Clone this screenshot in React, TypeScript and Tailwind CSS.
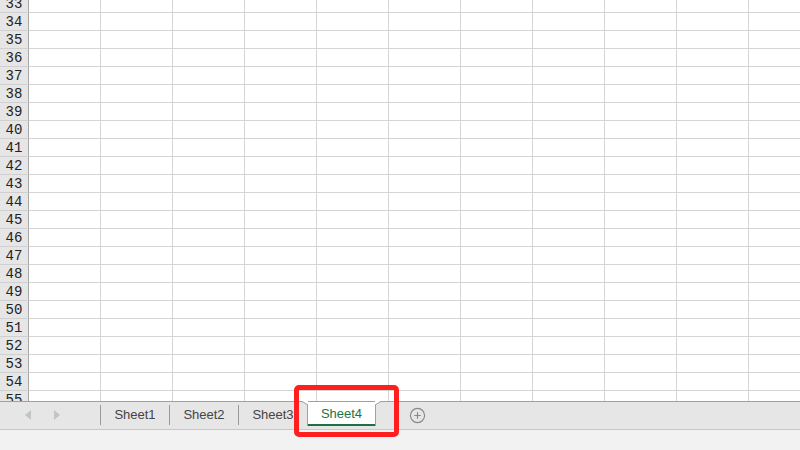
import { FiPlusCircle } from "react-icons/fi";

const rows = Array.from({ length: 23 }, (_, i) => 33 + i);
const cols = Array.from({ length: 11 }, (_, i) => i);

const tabs = ["Sheet1", "Sheet2", "Sheet3"];

export default function App() {
    return (
        <div className="relative flex h-[450px] w-[800px] flex-col overflow-hidden bg-white font-['Liberation_Sans',Arial,sans-serif]">
            {/* GRADE DE CELULAS */}
            <div className="h-[401px] overflow-hidden">
                <div className="-mt-[5px]">
                    {rows.map((row) => (
                        <div key={row} className="flex h-[18px]">
                            <div className="flex w-[29px] shrink-0 items-center justify-center border-r border-b border-r-[#a6a6a6] border-b-[#d0d0d0] bg-[#e6e6e6] font-['Liberation_Mono',monospace] text-[14px] leading-none text-[#222]">
                                {row}
                            </div>
                            {cols.map((col) => (
                                <div key={col} className="w-[72px] shrink-0 border-r border-b border-[#d4d4d4]" />
                            ))}
                        </div>
                    ))}
                </div>
            </div>

            {/* BARRA DE ABAS */}
            <div className="flex h-[29px] items-start border-t border-b border-t-[#a0a0a0] border-b-[#c8c8c8] bg-[#e6e6e6]">
                <div className="flex h-[26px] w-[100px] shrink-0 items-center">
                    <svg width="6" height="10" viewBox="0 0 6 10" className="ml-[25px]">
                        <path d="M6 0 L0 5 L6 10 Z" fill="#c4c4c4" />
                    </svg>
                    <svg width="6" height="10" viewBox="0 0 6 10" className="ml-[23px]">
                        <path d="M0 0 L6 5 L0 10 Z" fill="#c4c4c4" />
                    </svg>
                </div>
                {tabs.map((tab) => (
                    <div key={tab} className="flex h-[26px] items-center">
                        <div className="h-[20px] w-px bg-[#9a9a9a]" />
                        <div className="w-[68px] text-center text-[13px] text-[#444]">{tab}</div>
                    </div>
                ))}

                {/* ABA ATIVA */}
                <div className="relative flex h-[24px] w-[69px] items-center justify-center border-x border-[#a0a0a0] bg-white">
                    <svg width="6" height="4" viewBox="0 0 6 4" className="absolute -top-px -left-[6px]">
                        <path d="M0 0 L6 4 L6 0 Z" fill="#ffffff" />
                        <path d="M0 0.5 L6 4" stroke="#a0a0a0" strokeWidth="1" />
                    </svg>
                    <svg width="6" height="4" viewBox="0 0 6 4" className="absolute -top-px -right-[6px]">
                        <path d="M6 0 L0 4 L0 0 Z" fill="#ffffff" />
                        <path d="M6 0.5 L0 4" stroke="#a0a0a0" strokeWidth="1" />
                    </svg>
                    <span className="text-[13px] text-[#1e7145]">Sheet4</span>
                    <div className="absolute right-0 bottom-0 left-0 h-[2px] bg-[#1e7145]" />
                </div>

                <div className="ml-[33px] flex h-[26px] items-center text-[#888]">
                    <FiPlusCircle size={17} strokeWidth={1.6} />
                </div>
            </div>

            {/* BARRA DE STATUS */}
            <div className="flex-1 bg-[#f2f2f2]" />

            {/* DESTAQUE VERMELHO */}
            <div className="absolute top-[385px] left-[294px] h-[52px] w-[105px] rounded-[5px] border-[5px] border-[#ff1f1f]" />
        </div>
    );
}
